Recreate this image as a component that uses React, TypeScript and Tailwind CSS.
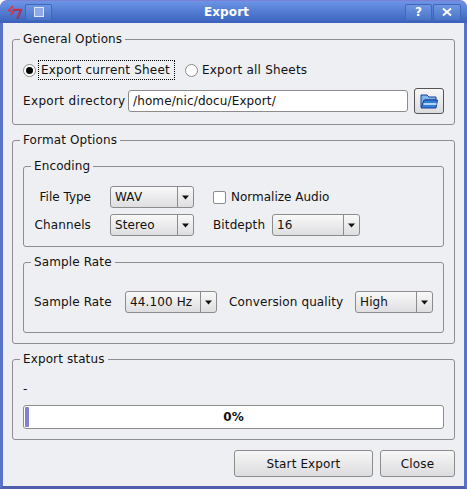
// Export dialog, KDE 3 style window
import type { ReactNode } from "react";

const fontCls = "font-['DejaVu_Sans',sans-serif] text-[12px] tracking-[0.12px] leading-[16px] text-[#111]";
const btnCls =
  "h-[27px] rounded-[3px] border border-[#8c8c8c] bg-gradient-to-b from-[#f7f7f8] to-[#dcdcde]";

function Group({ title, className, children }: { title: string; className?: string; children: ReactNode }) {
  return (
    <fieldset className={`min-w-0 rounded-[3px] border border-[#8e8e92] ${className ?? ""}`}>
      <legend className="-ml-[3px] px-[3px] leading-[16px]">{title}</legend>
      {children}
    </fieldset>
  );
}

function Combo({ value, className }: { value: string; className: string }) {
  return (
    <div
      className={`flex h-[22px] items-center rounded-[3px] border border-[#8c8c8c] bg-gradient-to-b from-[#f9f9fa] to-[#dedee0] ${className}`}
    >
      <span className="flex-1 pl-[4px]">{value}</span>
      <span className="flex h-full w-[16px] items-center justify-center border-l border-[#8c8c8c]">
        <svg width="7" height="5" viewBox="0 0 7 5">
          <path d="M0 0.5h7L3.5 4.5z" fill="#111" />
        </svg>
      </span>
    </div>
  );
}

function TitleButton({ children, className }: { children: ReactNode; className: string }) {
  return (
    <div
      className={`flex h-[17px] items-center justify-center rounded-[2px] border border-[#3f68b8] bg-gradient-to-b from-[#6f96e2] to-[#4a74c8] ${className}`}
    >
      {children}
    </div>
  );
}

export default function App() {
  return (
    <div className={`flex h-[489px] w-[467px] flex-col overflow-hidden bg-white ${fontCls}`}>
      {/* titlebar */}
      <div className="flex h-[23px] shrink-0 items-center rounded-t-[7px] border-t border-[#7d7fd2] bg-gradient-to-b from-[#6c94e6] to-[#3a62bc] pl-[7px] pr-[6px]">
        <svg width="15" height="15" viewBox="0 0 15 15" className="mr-[3px] shrink-0">
          <path d="M6 1 1.5 5.5 6.5 7 3.5 10" fill="none" stroke="#d8344a" strokeWidth="1.5" />
          <path d="M6 5h8l-3.5 9" fill="none" stroke="#5a4a7a" strokeWidth="2" />
          <path d="M5.5 4.5h8l-3.5 9" fill="none" stroke="#d62c40" strokeWidth="1.6" />
        </svg>
        <TitleButton className="w-[27px]">
          <span className="h-[10px] w-[10px] border border-[#dfe6f7] bg-[#8fabe8]" />
        </TitleButton>
        <span className="flex-1 pr-[4px] text-center font-bold text-white">Export</span>
        <TitleButton className="w-[27px] font-bold text-white">?</TitleButton>
        <TitleButton className="ml-[1px] w-[28px] font-bold text-white">
          <svg width="10" height="8" viewBox="0 0 10 8">
            <path d="M1 0.5 9 7.5M9 0.5 1 7.5" stroke="#fff" strokeWidth="2" />
          </svg>
        </TitleButton>
      </div>

      {/* body */}
      <div className="flex min-h-0 flex-1 flex-col border-x-[3px] border-b-[3px] border-x-[#5a72c8] border-b-[#4f5fae] bg-[#eeeff3] px-[9px] pt-[8px]">
        <Group title="General Options" className="px-[10px] pb-[10px] pt-[13px]">
          <div className="flex h-[20px] items-center">
            <span className="flex h-[13px] w-[13px] items-center justify-center rounded-full border border-[#8c8c8c] bg-white">
              <span className="h-[7px] w-[7px] rounded-full bg-black" />
            </span>
            <span className="ml-[2px] flex h-[20px] w-[137px] items-center whitespace-nowrap border border-dotted border-black pl-[2px] tracking-[0.2px]">
              Export current Sheet
            </span>
            <span className="ml-[10px] h-[13px] w-[13px] rounded-full border border-[#8c8c8c] bg-white" />
            <span className="ml-[4px] tracking-[0.2px]">Export all Sheets</span>
          </div>
          <div className="mt-[8px] flex h-[26px] items-center">
            <span className="w-[105px] tracking-[0.35px]">Export directory</span>
            <input
              readOnly
              value="/home/nic/docu/Export/"
              className="h-[22px] w-[280px] rounded-[3px] border border-[#8c8c8c] bg-white px-[4px] outline-none"
            />
            <button className="ml-[6px] flex h-[26px] w-[30px] items-center justify-center rounded-[3px] border border-[#555] bg-gradient-to-b from-[#f7f7f8] to-[#dcdcde]">
              <svg width="18" height="16" viewBox="0 0 18 16">
                <path d="M1 14V2h6l2 2h7v3H5L2 14z" fill="#7fb4ec" stroke="#1c3f9a" />
                <path d="M1 15h15l1.5-8H4z" fill="#2f7fd8" stroke="#1c3f9a" />
                <path d="M3.5 11h13" stroke="#e6f2ff" strokeWidth="1.5" />
              </svg>
            </button>
          </div>
        </Group>

        <Group title="Format Options" className="mt-[7px] px-[10px] pb-[10px] pt-[10px]">
          <Group title="Encoding" className="pb-[10px] pl-[10px] pr-[10px] pt-[12px]">
            <div className="flex h-[22px] items-center">
              <span className="w-[57px] text-right tracking-normal">File Type</span>
              <Combo value="WAV" className="ml-[19px] w-[84px]" />
              <span className="ml-[19px] h-[13px] w-[13px] rounded-[2px] border border-[#8c8c8c] bg-white" />
              <span className="ml-[5px] tracking-normal">Normalize Audio</span>
            </div>
            <div className="mt-[6px] flex h-[22px] items-center">
              <span className="w-[57px] text-right">Channels</span>
              <Combo value="Stereo" className="ml-[19px] w-[84px]" />
              <span className="ml-[19px] w-[59px]">Bitdepth</span>
              <Combo value="16" className="w-[88px]" />
            </div>
          </Group>
          <Group title="Sample Rate" className="mt-[7px] pb-[19px] pl-[10px] pr-[10px] pt-[21px]">
            <div className="flex h-[22px] items-center">
              <span className="w-[91px]">Sample Rate</span>
              <Combo value="44.100 Hz" className="w-[92px]" />
              <span className="ml-[12px] w-[126px]">Conversion quality</span>
              <Combo value="High" className="w-[78px]" />
            </div>
          </Group>
        </Group>

        <Group title="Export status" className="mt-[7px] px-[10px] pb-[10px] pt-[14px]">
          <div className="h-[16px]">-</div>
          <div className="relative mt-[8px] h-[24px] rounded-[3px] border border-[#8c8c8c] bg-white">
            <div className="absolute bottom-[1px] left-[1px] top-[1px] w-[4px] rounded-[1px] bg-[#8282cc]" />
            <div className="flex h-full items-center justify-center font-bold">0%</div>
          </div>
        </Group>

        <div className="mt-[10px] flex justify-end gap-[7px]">
          <button className={`${btnCls} w-[139px]`}>Start Export</button>
          <button className={`${btnCls} w-[75px]`}>Close</button>
        </div>
      </div>
    </div>
  );
}
